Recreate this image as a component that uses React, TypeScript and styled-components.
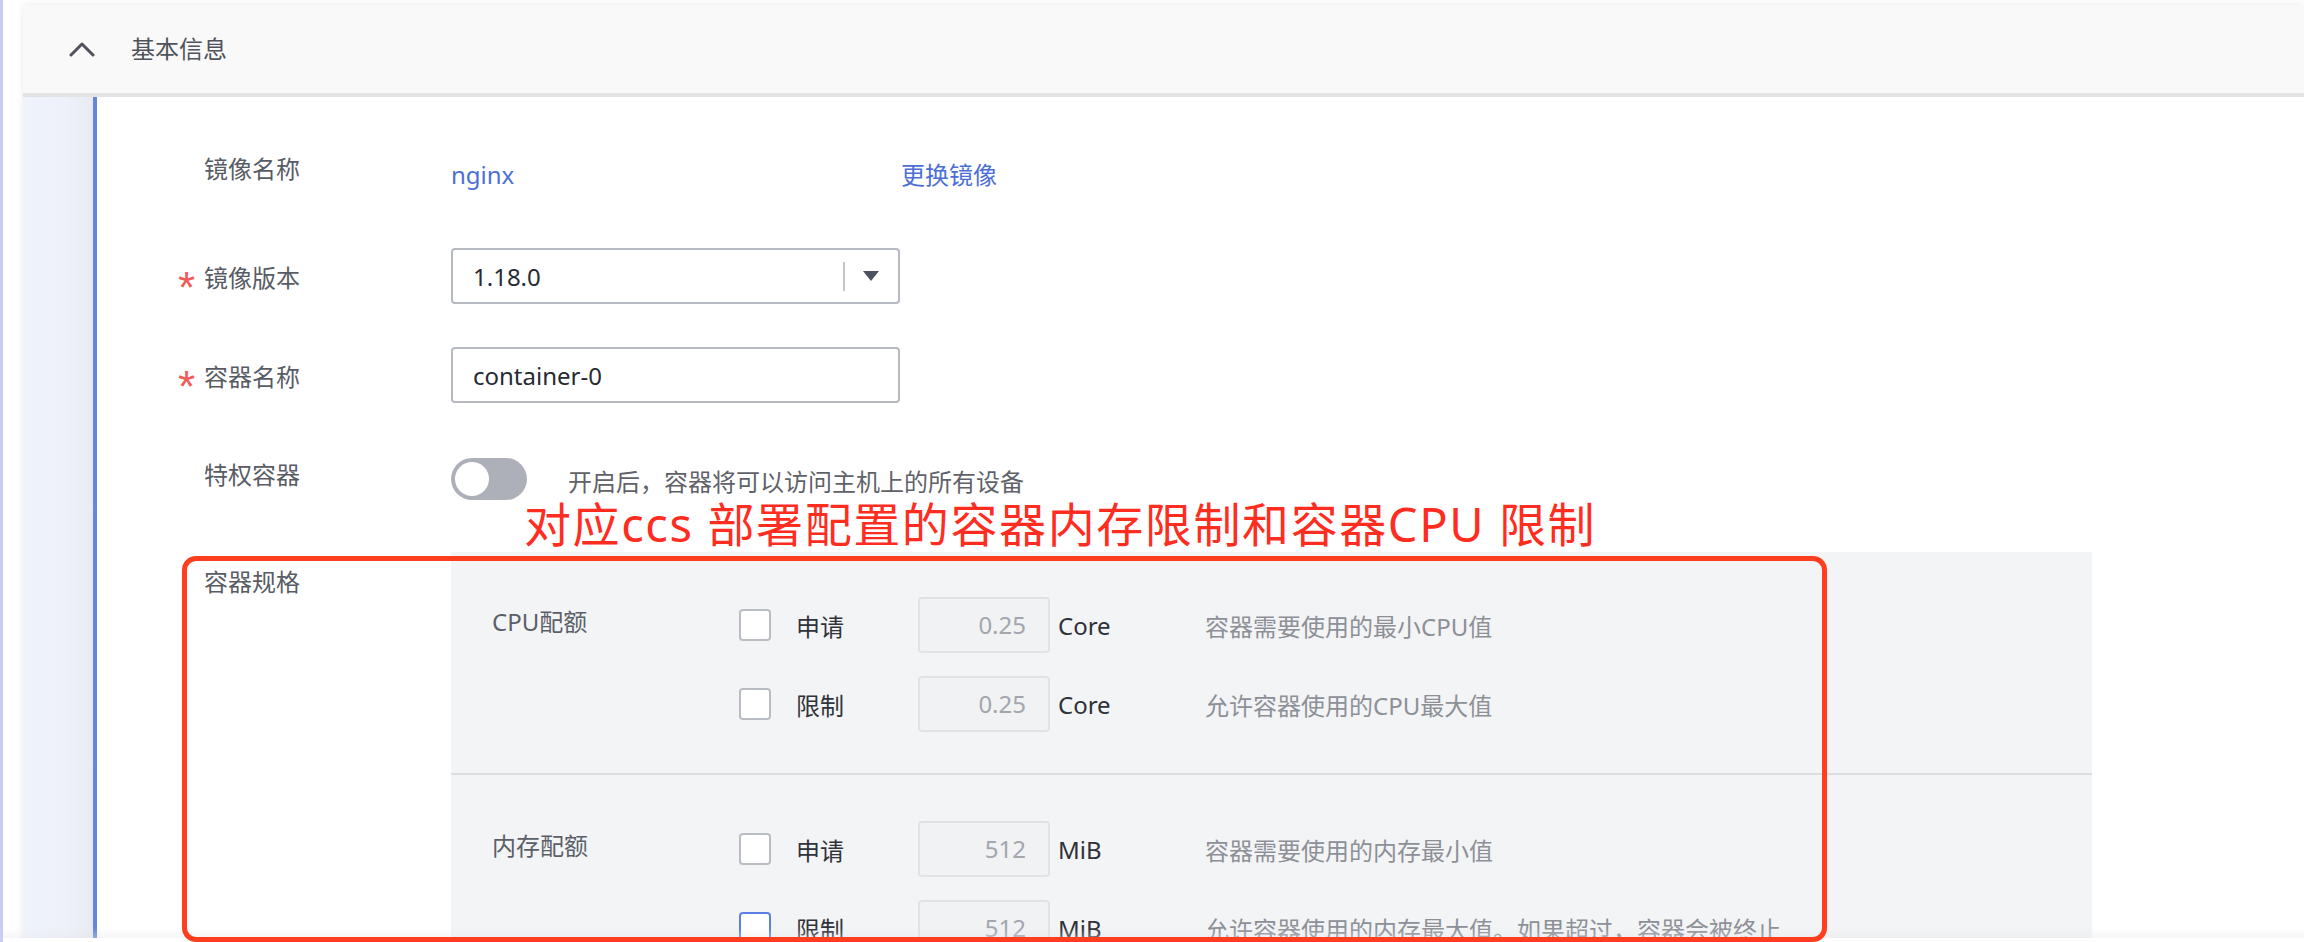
import React from "react";
import styled, { createGlobalStyle } from "styled-components";

const GlobalStyle = createGlobalStyle`
  html, body { margin: 0; padding: 0; background: #ffffff; }
  body {
    overflow: hidden;
    font-family: "Noto Sans", "Noto Sans CJK SC", sans-serif;
  }
  * { box-sizing: border-box; }
`;

const Page = styled.div`
  position: relative;
  width: 2304px;
  height: 942px;
  display: flex;
  border-left: 3px solid #c6cff3;
  padding: 5px 0 0 20px;
  overflow: hidden;
`;

const Card = styled.section`
  flex: 1;
  display: flex;
  flex-direction: column;
  background: #ffffff;
  box-shadow: 0 0 7px rgba(0, 0, 0, 0.09);
`;

const Header = styled.header`
  height: 92px;
  flex: none;
  display: flex;
  align-items: center;
  gap: 36px;
  padding-left: 46px;
  background: #f9f9f9;
  border-bottom: 4px solid #e3e3e6;
`;

const HeaderTitle = styled.span`
  font-size: 24px;
  line-height: 1;
  color: #50535b;
`;

const Body = styled.div`
  flex: 1;
  display: flex;
`;

const SideRail = styled.div`
  width: 74px;
  flex: none;
  background: linear-gradient(to right, #eff3fc, #eef1f9 60%, #e9ebf2);
  border-right: 4px solid #6586df;
`;

const Content = styled.div`
  flex: 1;
  display: flex;
  flex-direction: column;
  padding: 42px 0 0 83px;
`;

const FormRow = styled.div<{ $gap: number; $height?: number }>`
  position: relative;
  display: grid;
  grid-template-columns: 271px auto;
  align-items: start;
  margin-top: ${(p) => p.$gap}px;
  min-height: ${(p) => p.$height ?? 56}px;
`;

const Label = styled.div`
  display: flex;
  align-items: center;
  height: 56px;
  font-size: 24px;
  color: #585c65;
`;

const Required = styled.span<{ $show?: boolean }>`
  display: inline-block;
  width: 24px;
  font-family: "Liberation Sans", sans-serif;
  font-size: 44px;
  line-height: 1;
  color: #f25a5a;
  visibility: ${(p) => (p.$show ? "visible" : "hidden")};
  transform: translate(-2px, 12px);
`;

const LinkLine = styled.div`
  display: flex;
  padding-top: 8px;
  line-height: 56px;
  font-size: 24px;
`;

const ImageName = styled.span`
  width: 450px;
  color: #4d6fd5;
`;

const ChangeLink = styled.span`
  color: #4d6fd5;
`;

const FieldBox = styled.div`
  width: 449px;
  height: 56px;
  display: flex;
  align-items: center;
  padding: 0 19px 0 20px;
  border: 2px solid #b6b9c0;
  border-radius: 4px;
  background: #ffffff;
  font-size: 24px;
  color: #262a33;
`;

const FieldValue = styled.span`
  flex: 1;
`;

const SelectDivider = styled.span`
  width: 2px;
  height: 29px;
  margin-right: 18px;
  background: #c2c5cb;
`;

const ToggleLine = styled.div`
  display: flex;
  align-items: flex-start;
  gap: 41px;
  padding-top: 13px;
`;

const Toggle = styled.div`
  width: 76px;
  height: 42px;
  padding: 4px;
  border-radius: 21px;
  background: #adb0b9;
`;

const Knob = styled.div`
  width: 34px;
  height: 34px;
  border-radius: 50%;
  background: #ffffff;
`;

const ToggleText = styled.span`
  padding-top: 6px;
  font-size: 24px;
  line-height: 36px;
  color: #5f6269;
`;

const Annotation = styled.div`
  margin-left: 344px;
  font-family: "Noto Sans", "Noto Sans CJK SC", sans-serif;
  font-size: 47px;
  line-height: 47px;
  letter-spacing: 1.6px;
  color: #ff2d1f;
  white-space: nowrap;
`;

const SpecPanel = styled.div`
  width: 1641px;
  background: #f3f4f6;
`;

const Quota = styled.div<{ $top: number }>`
  display: grid;
  grid-template-columns: 247px auto;
  padding: ${(p) => p.$top}px 0 41px 41px;
`;

const QuotaDivider = styled.div`
  height: 2px;
  background: #dcdde0;
`;

const QuotaLabel = styled.div`
  font-size: 24px;
  line-height: 50px;
  color: #5b5f68;
`;

const QuotaRows = styled.div`
  display: flex;
  flex-direction: column;
  gap: 23px;
`;

const QuotaLine = styled.div`
  display: flex;
  align-items: center;
  height: 56px;
  font-size: 24px;
`;

const CheckBox = styled.span<{ $focus?: boolean }>`
  width: 32px;
  height: 32px;
  margin-right: 25px;
  border: 2px solid ${(p) => (p.$focus ? "#5c7fe6" : "#b9bcc3")};
  border-radius: 4px;
  background: #ffffff;
`;

const OptionText = styled.span`
  width: 122px;
  color: #30333a;
`;

const NumberBox = styled.span`
  width: 132px;
  height: 56px;
  padding-right: 22px;
  border: 2px solid #e1e2e5;
  border-radius: 4px;
  background: #f1f2f4;
  text-align: right;
  line-height: 52px;
  color: #a3a6ad;
`;

const Unit = styled.span`
  width: 155px;
  padding-left: 8px;
  color: #2e3138;
`;

const Desc = styled.span`
  color: #8d9097;
`;

const RedFrame = styled.div`
  position: absolute;
  left: 2px;
  top: 4px;
  width: 1645px;
  height: 386px;
  border: 5px solid #ff3d1f;
  border-radius: 14px;
  z-index: 3;
  pointer-events: none;
`;

const BottomFade = styled.div`
  position: absolute;
  left: 0;
  right: 0;
  bottom: 0;
  height: 14px;
  z-index: 2;
  pointer-events: none;
  background: linear-gradient(
    to bottom,
    rgba(255, 255, 255, 0) 0%,
    rgba(228, 228, 232, 0.35) 70%,
    #ffffff 71%
  );
`;

type QuotaItem = { option: string; value: string; unit: string; desc: string; focus?: boolean };

const cpu: QuotaItem[] = [
  { option: "申请", value: "0.25", unit: "Core", desc: "容器需要使用的最小CPU值" },
  { option: "限制", value: "0.25", unit: "Core", desc: "允许容器使用的CPU最大值" },
];

const mem: QuotaItem[] = [
  { option: "申请", value: "512", unit: "MiB", desc: "容器需要使用的内存最小值" },
  { option: "限制", value: "512", unit: "MiB", desc: "允许容器使用的内存最大值。如果超过，容器会被终止", focus: true },
];

function QuotaBlock({ title, items, top }: { title: string; items: QuotaItem[]; top: number }) {
  return (
    <Quota $top={top}>
      <QuotaLabel>{title}</QuotaLabel>
      <QuotaRows>
        {items.map((it) => (
          <QuotaLine key={it.option}>
            <CheckBox $focus={it.focus} />
            <OptionText>{it.option}</OptionText>
            <NumberBox>{it.value}</NumberBox>
            <Unit>{it.unit}</Unit>
            <Desc>{it.desc}</Desc>
          </QuotaLine>
        ))}
      </QuotaRows>
    </Quota>
  );
}

export default function App() {
  return (
    <>
      <GlobalStyle />
      <Page>
        <Card>
          <Header>
            <svg width="26" height="16" viewBox="0 0 26 16">
              <polyline
                points="2,14 13,3 24,14"
                fill="none"
                stroke="#4f525a"
                strokeWidth="3"
                strokeLinecap="round"
                strokeLinejoin="round"
              />
            </svg>
            <HeaderTitle>基本信息</HeaderTitle>
          </Header>
          <Body>
            <SideRail />
            <Content>
              <FormRow $gap={0} $height={66}>
                <Label>
                  <Required>*</Required>镜像名称
                </Label>
                <LinkLine>
                  <ImageName>nginx</ImageName>
                  <ChangeLink>更换镜像</ChangeLink>
                </LinkLine>
              </FormRow>

              <FormRow $gap={43}>
                <Label>
                  <Required $show>*</Required>镜像版本
                </Label>
                <FieldBox>
                  <FieldValue>1.18.0</FieldValue>
                  <SelectDivider />
                  <svg width="16" height="10" viewBox="0 0 16 10">
                    <polygon points="0,0 16,0 8,10" fill="#4d5060" />
                  </svg>
                </FieldBox>
              </FormRow>

              <FormRow $gap={43}>
                <Label>
                  <Required $show>*</Required>容器名称
                </Label>
                <FieldBox>
                  <FieldValue>container-0</FieldValue>
                </FieldBox>
              </FormRow>

              <FormRow $gap={42}>
                <Label>
                  <Required>*</Required>特权容器
                </Label>
                <ToggleLine>
                  <Toggle>
                    <Knob />
                  </Toggle>
                  <ToggleText>开启后，容器将可以访问主机上的所有设备</ToggleText>
                </ToggleLine>
              </FormRow>

              <Annotation>对应ccs 部署配置的容器内存限制和容器CPU 限制</Annotation>

              <FormRow $gap={4}>
                <Label>
                  <Required>*</Required>容器规格
                </Label>
                <SpecPanel>
                  <QuotaBlock title="CPU配额" items={cpu} top={45} />
                  <QuotaDivider />
                  <QuotaBlock title="内存配额" items={mem} top={46} />
                </SpecPanel>
                <RedFrame />
              </FormRow>
            </Content>
          </Body>
        </Card>
        <BottomFade />
      </Page>
    </>
  );
}
